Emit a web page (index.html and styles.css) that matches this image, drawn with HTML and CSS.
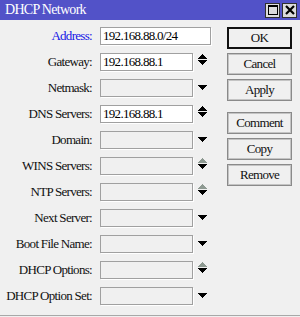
FILE: index.html
```html
<!DOCTYPE html>
<html lang="en">
<head>
  <meta charset="UTF-8">
  <title>DHCP Network</title>
  <link rel="stylesheet" href="styles.css">
</head>
<body>
  <div class="window">
    <div class="titlebar">
      <span class="title">DHCP Network</span>
      <div class="win-btns">
        <span class="win-btn">
          <svg width="12" height="12" viewBox="0 0 12 12"><rect x="1.5" y="1.5" width="9" height="9" fill="none" stroke="#000" stroke-width="1"/><rect x="1" y="1" width="10" height="2" fill="#000"/></svg>
        </span>
        <span class="win-btn">
          <svg width="12" height="12" viewBox="0 0 12 12"><path d="M2 2L10 10M10 2L2 10" stroke="#000" stroke-width="2.2"/></svg>
        </span>
      </div>
    </div>

    <div class="content">
      <div class="form">
        <div class="row">
          <label class="label label-key">Address:</label>
          <div class="field field-wide">192.168.88.0/24</div>
        </div>
        <div class="row">
          <label class="label">Gateway:</label>
          <div class="field">192.168.88.1</div>
          <svg class="arrow" width="9" height="11" viewBox="0 0 9 11"><path class="up" d="M4 0h1v1h1v1h1v1h1v1h1v1h-9v-1h1v-1h1v-1h1v-1h1z"/><path class="down" d="M0 6h9v1h-1v1h-1v1h-1v1h-1v1h-1v-1h-1v-1h-1v-1h-1v-1h-1z"/></svg>
        </div>
        <div class="row">
          <label class="label">Netmask:</label>
          <div class="field field-off"></div>
          <svg class="arrow" width="9" height="11" viewBox="0 0 9 11"><path class="down" d="M0 5h9v1h-1v1h-1v1h-1v1h-1v1h-1v-1h-1v-1h-1v-1h-1v-1h-1z"/></svg>
        </div>
        <div class="row">
          <label class="label">DNS Servers:</label>
          <div class="field">192.168.88.1</div>
          <svg class="arrow" width="9" height="11" viewBox="0 0 9 11"><path class="up" d="M4 0h1v1h1v1h1v1h1v1h1v1h-9v-1h1v-1h1v-1h1v-1h1z"/><path class="down" d="M0 6h9v1h-1v1h-1v1h-1v1h-1v1h-1v-1h-1v-1h-1v-1h-1v-1h-1z"/></svg>
        </div>
        <div class="row">
          <label class="label">Domain:</label>
          <div class="field field-off"></div>
          <svg class="arrow" width="9" height="11" viewBox="0 0 9 11"><path class="down" d="M0 5h9v1h-1v1h-1v1h-1v1h-1v1h-1v-1h-1v-1h-1v-1h-1v-1h-1z"/></svg>
        </div>
        <div class="row">
          <label class="label">WINS Servers:</label>
          <div class="field field-off"></div>
          <svg class="arrow" width="9" height="11" viewBox="0 0 9 11"><path class="up up-off" d="M4 0h1v1h1v1h1v1h1v1h1v1h-9v-1h1v-1h1v-1h1v-1h1z"/><path class="down" d="M0 6h9v1h-1v1h-1v1h-1v1h-1v1h-1v-1h-1v-1h-1v-1h-1v-1h-1z"/></svg>
        </div>
        <div class="row">
          <label class="label">NTP Servers:</label>
          <div class="field field-off"></div>
          <svg class="arrow" width="9" height="11" viewBox="0 0 9 11"><path class="up up-off" d="M4 0h1v1h1v1h1v1h1v1h1v1h-9v-1h1v-1h1v-1h1v-1h1z"/><path class="down" d="M0 6h9v1h-1v1h-1v1h-1v1h-1v1h-1v-1h-1v-1h-1v-1h-1v-1h-1z"/></svg>
        </div>
        <div class="row">
          <label class="label">Next Server:</label>
          <div class="field field-off"></div>
          <svg class="arrow" width="9" height="11" viewBox="0 0 9 11"><path class="down" d="M0 5h9v1h-1v1h-1v1h-1v1h-1v1h-1v-1h-1v-1h-1v-1h-1v-1h-1z"/></svg>
        </div>
        <div class="row">
          <label class="label">Boot File Name:</label>
          <div class="field field-off"></div>
          <svg class="arrow" width="9" height="11" viewBox="0 0 9 11"><path class="down" d="M0 5h9v1h-1v1h-1v1h-1v1h-1v1h-1v-1h-1v-1h-1v-1h-1v-1h-1z"/></svg>
        </div>
        <div class="row">
          <label class="label">DHCP Options:</label>
          <div class="field field-off"></div>
          <svg class="arrow" width="9" height="11" viewBox="0 0 9 11"><path class="up up-off" d="M4 0h1v1h1v1h1v1h1v1h1v1h-9v-1h1v-1h1v-1h1v-1h1z"/><path class="down" d="M0 6h9v1h-1v1h-1v1h-1v1h-1v1h-1v-1h-1v-1h-1v-1h-1v-1h-1z"/></svg>
        </div>
        <div class="row">
          <label class="label">DHCP Option Set:</label>
          <div class="field field-off"></div>
          <svg class="arrow" width="9" height="11" viewBox="0 0 9 11"><path class="down" d="M0 5h9v1h-1v1h-1v1h-1v1h-1v1h-1v-1h-1v-1h-1v-1h-1v-1h-1z"/></svg>
        </div>
      </div>

      <div class="buttons">
        <button class="btn btn-default">OK</button>
        <button class="btn">Cancel</button>
        <button class="btn">Apply</button>
        <button class="btn btn-gap">Comment</button>
        <button class="btn">Copy</button>
        <button class="btn">Remove</button>
      </div>
    </div>

    <div class="statusbar"></div>
  </div>
</body>
</html>
```

FILE: styles.css
```css
body {
  margin: 0;
  padding: 0;
  background-color: #f0f0f0;
  font-family: 'Liberation Serif', 'Times New Roman', serif;
  font-size: 13px;
  letter-spacing: -0.7px;
  color: #111;
}
.window {
  width: 300px;
  height: 317px;
  display: flex;
  flex-direction: column;
  overflow: hidden;
}
.titlebar {
  height: 20px;
  flex: none;
  display: flex;
  align-items: center;
  justify-content: space-between;
  padding: 0 3px 0 5px;
  background-color: #5252c8;
  color: white;
}
.title {
  line-height: 20px;
  font-size: 14px;
}
.win-btns {
  display: flex;
  gap: 2px;
}
.win-btn {
  width: 13px;
  height: 13px;
  display: flex;
  align-items: center;
  justify-content: center;
  background-color: #dcdcdc;
  border: 1px solid #303030;
}
.win-btn svg {
  display: block;
}
.content {
  flex: 1;
  display: flex;
  padding-top: 7px;
}
.form {
  display: flex;
  flex-direction: column;
  gap: 8px;
}
.row {
  display: flex;
  align-items: flex-start;
  height: 18px;
}
.label {
  width: 92px;
  margin-right: 8px;
  text-align: right;
  line-height: 18px;
  white-space: nowrap;
}
.label-key {
  color: #1414e6;
}
.field {
  width: 93px;
  height: 18px;
  box-sizing: border-box;
  padding-left: 2px;
  line-height: 16px;
  background-color: white;
  color: black;
  border: 1px solid #a0a0a0;
  box-shadow: 1px 1px 0 white;
  white-space: nowrap;
  overflow: hidden;
}
.field-wide {
  width: 111px;
}
.field-off {
  background-color: #f0f0f0;
}
.arrow {
  display: block;
  margin: 1px 0 0 5px;
  shape-rendering: crispEdges;
}
.arrow .up,
.arrow .down {
  fill: #000;
}
.arrow .up-off {
  fill: #8e9a92;
}
.buttons {
  display: flex;
  flex-direction: column;
  gap: 4px;
  margin-left: 16px;
}
.btn {
  width: 65px;
  height: 22px;
  padding: 0;
  font-family: inherit;
  font-size: 13px;
  letter-spacing: -0.7px;
  color: #111;
  background-color: #f0f0f0;
  border: 1px solid #8a8a8a;
  box-shadow: inset 0 0 0 1px #c4c4c4;
}
.btn-default {
  border: 2px solid #111;
  box-shadow: none;
}
.btn-gap {
  margin-top: 7px;
}
.statusbar {
  height: 1px;
  flex: none;
  margin-bottom: 1px;
  background-color: #a8a8a8;
}
```
